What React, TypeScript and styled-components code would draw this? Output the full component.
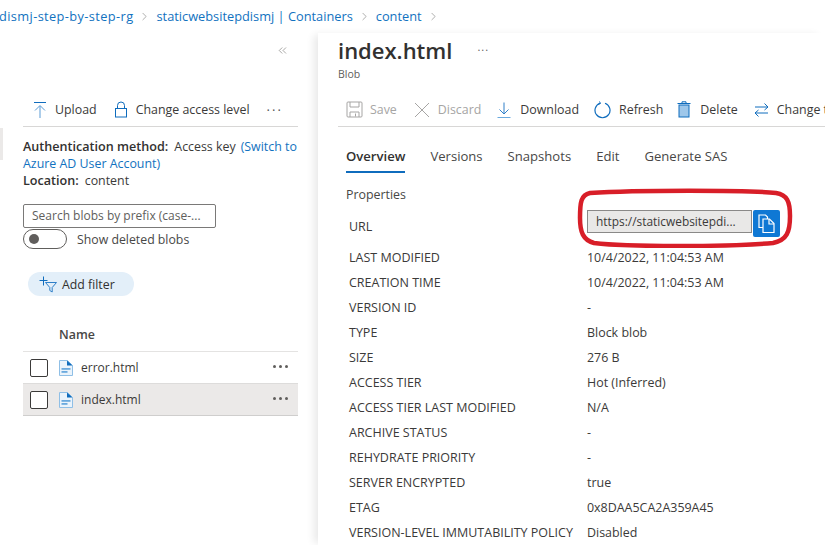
import styled, { createGlobalStyle } from "styled-components";
import { ChevronRight, ChevronsLeft } from "lucide-react";

const GlobalStyle = createGlobalStyle`
  html, body {
    margin: 0;
    padding: 0;
    background: #fff;
    overflow: hidden;
  }
  body {
    font-family: "Open Sans", "Noto Sans", "Liberation Sans", sans-serif;
    font-size: 12px;
    color: #3b3a39;
  }
`;

const Page = styled.div`
  position: relative;
  width: 825px;
  height: 545px;
  overflow: hidden;
`;

const Breadcrumb = styled.nav`
  display: flex;
  align-items: center;
  height: 33px;
  padding-bottom: 1px;
  box-sizing: border-box;
  margin-left: -1px;
  color: #1272c0;
  font-size: 12.8px;
  white-space: nowrap;
  svg {
    color: #6b6a69;
    margin: 0 5px;
  }
`;

const Crumb = styled.span<{ $spacing?: number }>`
  letter-spacing: ${(p) => p.$spacing ?? 0}px;
`;

const Columns = styled.div`
  display: flex;
  height: 512px;
`;

const LeftPanel = styled.aside`
  width: 298px;
  padding-left: 23px;
  box-sizing: border-box;
  flex: none;
`;

const CollapseRow = styled.div`
  display: flex;
  justify-content: flex-end;
  height: 52px;
  padding: 11px 9px 0 0;
  box-sizing: border-box;
  color: #605e5c;
`;

const Toolbar = styled.div`
  display: flex;
  align-items: center;
  padding-top: 8px;
  height: 33px;
  border-bottom: 1px solid #d8d7d6;
  white-space: nowrap;
  overflow: hidden;
`;

const ToolItem = styled.div<{ $gap?: number; $muted?: boolean; $after?: number }>`
  display: flex;
  align-items: center;
  gap: ${(p) => p.$gap ?? 7}px;
  margin-right: ${(p) => p.$after ?? 0}px;
  font-size: 12.4px;
  color: ${(p) => (p.$muted ? "#a6a5a4" : "#3b3a39")};
  flex: none;
`;

const UploadBar = styled(Toolbar)`
  padding-left: 10px;
`;

const Dots = styled.span`
  letter-spacing: 2px;
  font-size: 13px;
  color: #555;
  margin-left: 17px;
  line-height: 1;
  position: relative;
  top: -3px;
`;

const AuthBlock = styled.div`
  padding-top: 11px;
  font-size: 12.4px;
  line-height: 17px;
  color: #3b3a39;
  white-space: nowrap;
`;

const AuthLine = styled.div`
  display: flex;
  gap: 5px;
`;

const AuthKey = styled.span`
  font-weight: 600;
  font-size: 12.6px;
  margin-right: 1px;
  color: #323130;
`;

const AuthLink = styled.span`
  color: #1272c0;
`;

const SearchBox = styled.div`
  margin-top: 15px;
  width: 193px;
  height: 24px;
  box-sizing: border-box;
  border: 1px solid #7a7978;
  border-radius: 2px;
  padding-left: 8px;
  line-height: 22px;
  font-size: 12px;
  color: #605e5c;
  white-space: nowrap;
`;

const ToggleRow = styled.div`
  display: flex;
  align-items: center;
  gap: 10px;
  height: 20px;
  margin-top: 1px;
  font-size: 12.3px;
  color: #484746;
`;

const Toggle = styled.div`
  width: 44px;
  height: 20px;
  box-sizing: border-box;
  border: 1px solid #605e5c;
  border-radius: 10px;
  padding: 4px;
  &::before {
    content: "";
    display: block;
    width: 10px;
    height: 10px;
    margin-left: 1px;
    border-radius: 50%;
    background: #605e5c;
  }
`;

const FilterPill = styled.div`
  display: inline-flex;
  align-items: center;
  gap: 5px;
  margin: 23px 0 0 5px;
  width: 106px;
  height: 24px;
  box-sizing: border-box;
  padding-left: 11px;
  border-radius: 12px;
  background: #e3eff9;
  font-size: 12.3px;
  color: #323130;
`;

const NameHeader = styled.div`
  height: 55px;
  padding: 29px 0 0 36px;
  box-sizing: border-box;
  font-size: 12.4px;
  font-weight: 600;
  color: #484746;
  border-bottom: 1px solid #e4e3e2;
`;

const BlobRow = styled.div<{ $selected?: boolean }>`
  display: flex;
  align-items: center;
  height: 32px;
  box-sizing: border-box;
  padding: 1px 10px 0 7px;
  font-size: 12px;
  color: #3b3a39;
  background: ${(p) => (p.$selected ? "#ebe9e8" : "#fff")};
  border-bottom: 1px solid ${(p) => (p.$selected ? "#cfcecd" : "#dddcdb")};
`;

const Checkbox = styled.div`
  width: 18px;
  height: 18px;
  box-sizing: border-box;
  border: 1px solid #3b3a39;
  border-radius: 2px;
  margin-right: 11px;
  background: #fff;
`;

const BlobName = styled.span`
  margin-left: 8px;
  flex: 1;
`;

const RowDots = styled.div`
  display: flex;
  gap: 3px;
  position: relative;
  top: -1px;
  span {
    width: 3px;
    height: 3px;
    border-radius: 50%;
    background: #605e5c;
  }
`;

const SelectedTick = styled.div`
  position: absolute;
  left: 0;
  top: 128px;
  width: 3px;
  height: 32px;
  background: #ebe9e8;
`;

const RightPanel = styled.main`
  position: relative;
  flex: 1;
  margin-left: 20px;
  padding-left: 20px;
  box-shadow: -6px 0 8px -2px rgba(0, 0, 0, 0.09);
  min-width: 0;
`;

const Title = styled.div`
  display: flex;
  align-items: center;
  height: 27px;
  margin-top: 3px;
  font-size: 22px;
  font-weight: 600;
  color: #323130;
`;

const TitleDots = styled.span`
  margin-left: 25px;
  font-size: 11px;
  font-weight: 400;
  letter-spacing: 1px;
  color: #605e5c;
  position: relative;
  top: -3px;
`;

const Subtitle = styled.div`
  font-size: 10.5px;
  line-height: 14px;
  margin-top: 4px;
  color: #605e5c;
`;

const ActionBar = styled(Toolbar)`
  margin-top: 4px;
  padding-left: 8px;
`;

const Tabs = styled.div`
  display: flex;
  gap: 25px;
  margin: 15px 0 0 8px;
  height: 31px;
`;

const Tab = styled.div<{ $active?: boolean }>`
  height: 31px;
  line-height: 28px;
  font-size: 13.1px;
  font-weight: ${(p) => (p.$active ? 600 : 400)};
  color: ${(p) => (p.$active ? "#323130" : "#484746")};
  box-sizing: border-box;
  border-bottom: ${(p) => (p.$active ? "2px solid #0f6cbd" : "none")};
`;

const SectionLabel = styled.div`
  margin: 13px 0 0 8px;
  font-size: 12.4px;
  line-height: 18px;
  color: #484746;
`;

const PropertyGrid = styled.div`
  display: grid;
  grid-template-columns: 238px 1fr;
  margin: 4px 0 0 11px;
  color: #3b3a39;
  white-space: nowrap;
`;

const PropLabel = styled.div<{ $tall?: boolean }>`
  height: ${(p) => (p.$tall ? 37 : 25)}px;
  line-height: ${(p) => (p.$tall ? 38 : 25)}px;
  font-size: 12.5px;
`;

const PropValue = styled.div`
  height: 25px;
  line-height: 25px;
  font-size: 12.45px;
`;

const UrlCell = styled.div`
  display: flex;
  align-items: flex-start;
  height: 37px;
  padding-top: 2px;
  box-sizing: border-box;
`;

const UrlField = styled.div`
  width: 165px;
  height: 23px;
  box-sizing: border-box;
  border: 1px solid #8a8988;
  background: #e9e8e7;
  padding-left: 8px;
  line-height: 21px;
  font-size: 11.9px;
  color: #3b3a39;
`;

const CopyButton = styled.div`
  display: flex;
  align-items: center;
  justify-content: center;
  width: 27px;
  height: 27px;
  margin-left: 1px;
  border-radius: 2px;
  background: #0f78d4;
`;

const Highlight = styled.svg`
  position: absolute;
  left: 576px;
  top: 188px;
  pointer-events: none;
`;

const blue = "#0f6cbd";

const UploadIcon = () => (
  <svg width="14" height="18" viewBox="0 0 14 18" fill="none" stroke={blue}>
    <path d="M1 1.5h12" />
    <path d="M7 17V5M2 9.5 7 4.5l5 5" stroke="#5b9bd5" />
  </svg>
);

const LockIcon = () => (
  <svg width="14" height="17" viewBox="0 0 14 17" fill="none" stroke={blue}>
    <rect x="1.5" y="7.5" width="11" height="8.5" />
    <path d="M3.5 7.5V4.5a3.5 3.5 0 0 1 7 0v3" />
  </svg>
);

const SaveIcon = () => (
  <svg width="17" height="17" viewBox="0 0 17 17" fill="none" stroke="#a6a5a4">
    <rect x="1" y="1" width="15" height="15" rx="1" />
    <path d="M4 1v5h9V1M4 16v-5h9v5M9.5 12.5v3" />
  </svg>
);

const CloseIcon = () => (
  <svg width="16" height="16" viewBox="0 0 16 16" fill="none" stroke="#a6a5a4">
    <path d="M1 1l14 14M15 1 1 15" />
  </svg>
);

const DownloadIcon = () => (
  <svg width="14" height="16" viewBox="0 0 14 16" fill="none">
    <path d="M7 0.5v11M2.5 7.5 7 12l4.5-4.5" stroke="#2f7fc8" />
    <path d="M0.5 15.5h13" stroke="#6aa9de" />
  </svg>
);

const RefreshIcon = () => (
  <svg width="17" height="18" viewBox="0 0 17 18" fill="none" stroke={blue}>
    <path d="M6 2.2a7.5 7.5 0 1 0 5 0" strokeWidth="1.2" />
    <path d="M5.5 0.5 6.5 2.5 4 3.4" strokeWidth="1" />
  </svg>
);

const DeleteIcon = () => (
  <svg width="14" height="17" viewBox="0 0 14 17" fill="none">
    <rect x="2" y="4" width="10" height="12" fill="#9ec7ea" stroke={blue} />
    <path d="M0.5 2.5h13M5 2.5V0.8h4v1.7" stroke={blue} />
  </svg>
);

const SwapIcon = () => (
  <svg width="15" height="16" viewBox="0 0 15 16" fill="none" stroke={blue}>
    <path d="M1 5h13M10.5 1.5 14 5l-3.5 3" />
    <path d="M14 11H1M4.5 8 1 11l3.5 3.5" />
  </svg>
);

const FilterIcon = () => (
  <svg width="18" height="17" viewBox="0 0 18 17" fill="none">
    <path d="M4.5 0.5v9M0.5 4.5h8" stroke="#0f6cbd" />
    <path d="M6.5 6.5h11l-4.3 5v4.5l-2.4-1.5v-3z" stroke="#2f7fc8" />
  </svg>
);

const FileIcon = () => (
  <svg width="14" height="16" viewBox="0 0 14 16" fill="none">
    <path d="M0.5 0.5h8l5 5v10h-13z" fill="#eaf3fb" stroke="#8fbfe6" />
    <path d="M8 0.5l5.5 5H8z" fill={blue} />
    <path d="M2.5 8h9v1.8h-9z" fill="#6aa9de" />
    <path d="M2.5 11h6v1.8h-6z" fill="#6aa9de" />
  </svg>
);

const CopyIcon = () => (
  <svg width="17" height="19" viewBox="0 0 17 19" fill="none" stroke="#fff" strokeWidth="1.2">
    <path d="M5 13.5H1V1h6.5l2 2v2" />
    <path d="M5 5h6.5L16 9.5v9H5z" />
    <path d="M11 5v5h5" />
  </svg>
);

const properties: [string, string][] = [
  ["LAST MODIFIED", "10/4/2022, 11:04:53 AM"],
  ["CREATION TIME", "10/4/2022, 11:04:53 AM"],
  ["VERSION ID", "-"],
  ["TYPE", "Block blob"],
  ["SIZE", "276 B"],
  ["ACCESS TIER", "Hot (Inferred)"],
  ["ACCESS TIER LAST MODIFIED", "N/A"],
  ["ARCHIVE STATUS", "-"],
  ["REHYDRATE PRIORITY", "-"],
  ["SERVER ENCRYPTED", "true"],
  ["ETAG", "0x8DAA5CA2A359A45"],
  ["VERSION-LEVEL IMMUTABILITY POLICY", "Disabled"],
];

const App = () => {
  return (
    <Page>
      <GlobalStyle />
      <Breadcrumb>
        <Crumb $spacing={0.38}>dismj-step-by-step-rg</Crumb>
        <ChevronRight size={13} strokeWidth={1} />
        <Crumb>staticwebsitepdismj | Containers</Crumb>
        <ChevronRight size={13} strokeWidth={1} />
        <Crumb>content</Crumb>
        <ChevronRight size={13} strokeWidth={1} />
      </Breadcrumb>
      <Columns>
        <LeftPanel>
          <CollapseRow>
            <ChevronsLeft size={13} strokeWidth={1} />
          </CollapseRow>
          <UploadBar>
            <ToolItem $after={17} $gap={8}>
              <UploadIcon /> Upload
            </ToolItem>
            <ToolItem $gap={8}>
              <LockIcon /> Change access level
            </ToolItem>
            <Dots>...</Dots>
          </UploadBar>
          <AuthBlock>
            <AuthLine>
              <AuthKey>Authentication method:</AuthKey>
              <span>Access key</span>
              <AuthLink>(Switch to</AuthLink>
            </AuthLine>
            <AuthLink>Azure AD User Account)</AuthLink>
            <AuthLine>
              <AuthKey>Location:</AuthKey>
              <span>content</span>
            </AuthLine>
          </AuthBlock>
          <SearchBox>Search blobs by prefix (case-...</SearchBox>
          <ToggleRow>
            <Toggle />
            Show deleted blobs
          </ToggleRow>
          <FilterPill>
            <FilterIcon /> Add filter
          </FilterPill>
          <NameHeader>Name</NameHeader>
          <BlobRow>
            <Checkbox />
            <FileIcon />
            <BlobName>error.html</BlobName>
            <RowDots>
              <span />
              <span />
              <span />
            </RowDots>
          </BlobRow>
          <BlobRow $selected>
            <Checkbox />
            <FileIcon />
            <BlobName>index.html</BlobName>
            <RowDots>
              <span />
              <span />
              <span />
            </RowDots>
          </BlobRow>
        </LeftPanel>
        <RightPanel>
          <Title>
            index.html
            <TitleDots>...</TitleDots>
          </Title>
          <Subtitle>Blob</Subtitle>
          <ActionBar>
            <ToolItem $muted $after={17} $gap={7}>
              <SaveIcon /> Save
            </ToolItem>
            <ToolItem $muted $after={16} $gap={8}>
              <CloseIcon /> Discard
            </ToolItem>
            <ToolItem $after={15} $gap={9}>
              <DownloadIcon /> Download
            </ToolItem>
            <ToolItem $after={14} $gap={8}>
              <RefreshIcon /> Refresh
            </ToolItem>
            <ToolItem $after={16} $gap={9}>
              <DeleteIcon /> Delete
            </ToolItem>
            <ToolItem $gap={8}>
              <SwapIcon /> Change tier
            </ToolItem>
          </ActionBar>
          <Tabs>
            <Tab $active>Overview</Tab>
            <Tab>Versions</Tab>
            <Tab>Snapshots</Tab>
            <Tab>Edit</Tab>
            <Tab>Generate SAS</Tab>
          </Tabs>
          <SectionLabel>Properties</SectionLabel>
          <PropertyGrid>
            <PropLabel $tall>URL</PropLabel>
            <UrlCell>
              <UrlField>https://staticwebsitepdi...</UrlField>
              <CopyButton>
                <CopyIcon />
              </CopyButton>
            </UrlCell>
            {properties.map(([label, value]) => (
              <div key={label} style={{ display: "contents" }}>
                <PropLabel>{label}</PropLabel>
                <PropValue>{value}</PropValue>
              </div>
            ))}
          </PropertyGrid>
        </RightPanel>
      </Columns>
      <SelectedTick />
      <Highlight width="222" height="60" viewBox="0 0 222 60" fill="none">
        <path
          d="M14 5 C60 2 170 2 200 5 C211 7 214 13 214 28 C214 44 211 52 197 55 C150 59 50 59 18 55 C7 52 4 44 4 30 C4 14 5 7 14 5 Z"
          stroke="#d81e28"
          strokeWidth="4.5"
        />
      </Highlight>
    </Page>
  );
};

export default App;
